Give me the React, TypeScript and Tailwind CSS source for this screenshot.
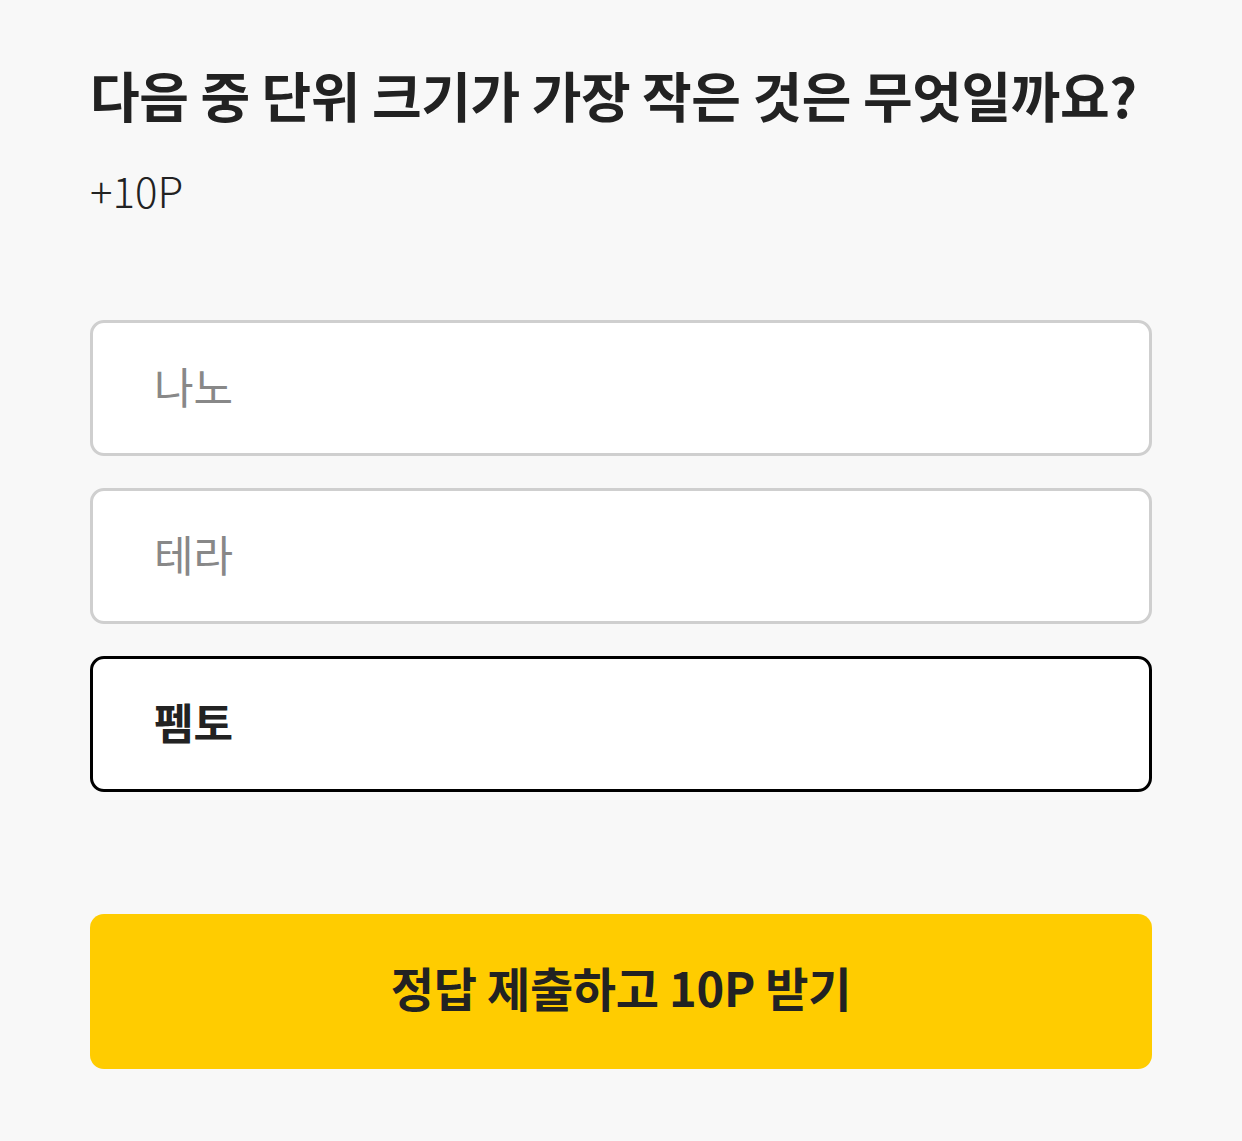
import * as React from "react"

const OPTIONS = ["나노", "테라", "펨토"]

export default function App() {
  const [selected, setSelected] = React.useState(2)

  return (
    <div
      className="min-h-[1141px] w-full bg-[#f8f8f8] px-[90px] pt-[58px]"
      style={{ fontFamily: '"Noto Sans CJK KR", "Noto Sans", sans-serif' }}
    >
      <h1 className="text-[54px] font-bold leading-[74px] tracking-[-0.4px] text-[#222222]">
        다음 중 단위 크기가 가장 작은 것은 무엇일까요?
      </h1>
      <p className="mt-[32px] text-[42px] font-light leading-[52px] text-[#222222]">+10P</p>

      <div className="mt-[104px] flex flex-col gap-[32px]">
        {OPTIONS.map((label, i) => {
          const active = i === selected
          return (
            <button
              key={label}
              type="button"
              onClick={() => setSelected(i)}
              className={
                active
                  ? "flex h-[136px] w-full items-center rounded-[14px] border-[3px] border-black bg-white pl-[61px] text-left text-[43px] font-bold text-[#222222]"
                  : "flex h-[136px] w-full items-center rounded-[14px] border-[3px] border-[#cfcfcf] bg-white pl-[61px] text-left text-[43px] font-normal text-[#888888]"
              }
            >
              <span className="-mt-[6px]">{label}</span>
            </button>
          )
        })}
      </div>

      <button
        type="button"
        className="mt-[122px] flex h-[155px] w-full items-center justify-center rounded-[14px] bg-[#ffcc00] pb-[8px] text-[47px] font-bold tracking-[-0.3px] text-[#222222]"
      >
        정답 제출하고 10P 받기
      </button>
    </div>
  )
}
